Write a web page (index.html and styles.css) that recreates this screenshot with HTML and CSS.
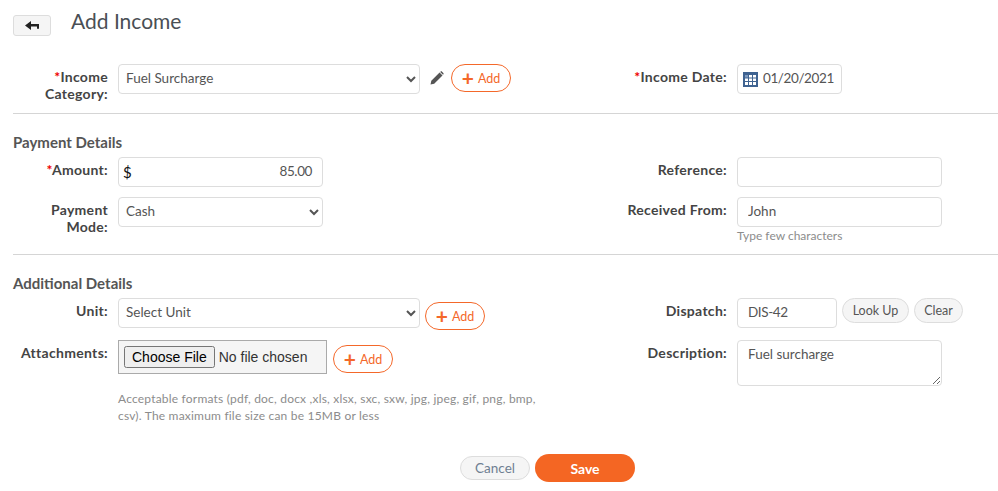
FILE: index.html
```html
<!DOCTYPE html>
<html lang="en">
<head>
    <meta charset="UTF-8">
    <title>Add Income</title>
    <link rel="stylesheet" href="styles.css">
</head>
<body>
    <div class="page-head">
        <button class="back-btn" title="Back">
            <svg width="14" height="10" viewBox="0 0 14 10"><path d="M0 4.5 L6 0 V3 H14 V7.8 H12 V5.6 H6 V9 Z" fill="#222"/></svg>
        </button>
        <h1>Add Income</h1>
    </div>

    <!-- Income category and date -->
    <div class="form-row first-row">
        <div class="col-left field">
            <label><span class="req">*</span>Income Category:</label>
            <select class="control wide"><option>Fuel Surcharge</option></select>
            <svg class="edit-icon" width="14" height="14" viewBox="0 0 14 14"><path d="M0.5 13.5 L1.3 9.8 L9.6 1.5 L12.5 4.4 L4.2 12.7 Z M10.5 .7 C11 .2 11.6 .2 12.1 .7 L13.3 1.9 C13.8 2.4 13.8 3 13.3 3.5 L13 3.8 L10.2 1 Z" fill="#555"/></svg>
            <button class="add-btn"><span class="plus">+</span> Add</button>
        </div>
        <div class="col-right field">
            <label><span class="req">*</span>Income Date:</label>
            <div class="control date-box">
                <svg width="15" height="15" viewBox="0 0 15 15"><rect width="15" height="15" fill="#3f6391"/><path d="M6 3h3v2.5H6zM10 3h3v2.5h-3zM2 6.5h3V9H2zM6 6.5h3V9H6zM10 6.5h3V9h-3zM2 10h3v3H2zM6 10h3v3H6zM10 10h3v3h-3z" fill="#fff"/><path d="M2 3h3v2.5H2z" fill="#7f9bc0"/></svg>
                <span class="digits">01/20/2021</span>
            </div>
        </div>
    </div>

    <hr class="rule-one">

    <!-- Payment details -->
    <h2>Payment Details</h2>
    <div class="form-row">
        <div class="col-left field">
            <label><span class="req">*</span>Amount:</label>
            <div class="control amount-box"><span class="dollar">$</span><span class="digits">85.00</span></div>
        </div>
        <div class="col-right field">
            <label>Reference:</label>
            <input class="control mid" type="text">
        </div>
    </div>
    <div class="form-row">
        <div class="col-left field">
            <label>Payment Mode:</label>
            <select class="control mid"><option>Cash</option></select>
        </div>
        <div class="col-right field">
            <label>Received From:</label>
            <div>
                <input class="control mid" type="text" value="John">
                <p class="hint">Type few characters</p>
            </div>
        </div>
    </div>

    <hr class="rule-two">

    <!-- Additional details -->
    <h2>Additional Details</h2>
    <div class="form-row">
        <div class="col-left field">
            <label>Unit:</label>
            <select class="control wide"><option>Select Unit</option></select>
            <button class="add-btn unit-add"><span class="plus">+</span> Add</button>
        </div>
        <div class="col-right field">
            <label>Dispatch:</label>
            <input class="control small digits" type="text" value="DIS-42">
            <button class="pill look-up">Look Up</button>
            <button class="pill clear">Clear</button>
        </div>
    </div>
    <div class="form-row last-row">
        <div class="col-left field">
            <label>Attachments:</label>
            <div>
                <div class="attach-line">
                    <input class="file-input" type="file">
                    <button class="add-btn file-add"><span class="plus">+</span> Add</button>
                </div>
                <p class="hint formats">Acceptable formats (pdf, doc, docx ,xls, xlsx, sxc, sxw, jpg, jpeg, gif, png, bmp, csv). The maximum file size can be 15MB or less</p>
            </div>
        </div>
        <div class="col-right field">
            <label>Description:</label>
            <textarea class="control mid desc">Fuel surcharge</textarea>
        </div>
    </div>

    <div class="actions">
        <button class="pill cancel">Cancel</button>
        <button class="save">Save</button>
    </div>
</body>
</html>
```

FILE: styles.css
```css
* {
    box-sizing: border-box;
}

body {
    margin: 0;
    padding: 0 0 0 13px;
    height: 491px;
    overflow: hidden;
    background-color: #fff;
    color: #444;
    font-family: 'Lato', sans-serif;
    font-size: 14px;
}

button {
    font-family: inherit;
    cursor: pointer;
}

.page-head {
    display: flex;
    align-items: flex-start;
    height: 64px;
    padding-top: 9px;
}

.back-btn {
    display: flex;
    align-items: center;
    justify-content: center;
    width: 38px;
    height: 21px;
    margin-top: 6px;
    padding: 0;
    background-color: #f5f5f5;
    border: 1px solid #ddd;
    border-radius: 3px;
}

h1 {
    margin: 0 0 0 20px;
    font-size: 21px;
    line-height: 24px;
    font-weight: 400;
    color: #4a4f55;
}

h2 {
    margin: 0;
    height: 25px;
    font-size: 15px;
    line-height: 20px;
    font-weight: 700;
    color: #555;
}

hr {
    border: none;
    border-top: 1px solid #d5d5d5;
    margin: 0;
}

.rule-one {
    margin-top: 11px;
    margin-bottom: 18px;
}

.rule-two {
    margin-top: 0;
    margin-bottom: 18px;
}

.form-row {
    display: flex;
    align-items: flex-start;
    margin-bottom: 10px;
}

.first-row {
    margin-bottom: 0;
}

.last-row {
    margin-bottom: 30px;
}

.col-left {
    width: 606px;
}

.col-right {
    flex: 1;
}

.field {
    display: flex;
    align-items: flex-start;
}

label {
    flex: none;
    width: 95px;
    margin-right: 10px;
    padding-top: 4px;
    text-align: right;
    font-size: 14px;
    line-height: 17px;
    font-weight: 700;
    letter-spacing: .3px;
    color: #444;
}

.col-right label {
    width: 108px;
}

.req {
    color: #e00;
}

.control {
    display: block;
    height: 30px;
    padding: 0 3px 3px;
    background-color: #fff;
    border: 1px solid #ddd;
    border-radius: 4px;
    color: #555;
    font-family: inherit;
    font-size: 13.5px;
}

input.control,
textarea.control {
    padding: 0 10px 3px;
}

.digits {
    letter-spacing: -.4px;
}

.wide {
    width: 302px;
}

.mid {
    width: 205px;
}

.small {
    width: 100px;
}

.date-box {
    display: flex;
    align-items: center;
    gap: 5px;
    width: 105px;
    padding: 0 5px 2px;
}

.date-box svg {
    flex: none;
    margin-top: 2px;
}

.amount-box {
    display: flex;
    align-items: center;
    justify-content: space-between;
    width: 205px;
    padding: 0 10px 3px 4px;
}

.dollar {
    color: #111;
    font-size: 15px;
    margin-top: 3px;
}

.edit-icon {
    margin: 7px 7px 0 10px;
}

.add-btn {
    display: flex;
    align-items: center;
    justify-content: center;
    gap: 4px;
    width: 60px;
    height: 28px;
    padding: 0;
    background-color: #fff;
    border: 1px solid #f4682a;
    border-radius: 14px;
    color: #f4682a;
    font-size: 12.5px;
}

.plus {
    font-size: 21px;
    line-height: 18px;
    font-weight: 700;
}

.unit-add {
    margin: 4px 0 0 5px;
}

.attach-line {
    display: flex;
    align-items: flex-start;
}

.file-input {
    display: block;
    width: 209px;
    height: 34px;
    padding: 5px;
    background-color: #f5f5f5;
    border: 1px solid #aaa;
    color: #333;
    font-family: 'Liberation Sans', sans-serif;
    font-size: 14px;
}

.file-add {
    margin: 5px 0 0 6px;
}

.hint {
    margin: 0;
    font-size: 12px;
    line-height: 17px;
    color: #8c8c8c;
}

.formats {
    width: 430px;
    margin-top: 16px;
    letter-spacing: .2px;
}

.pill {
    height: 25px;
    padding: 0;
    margin-left: 5px;
    background-color: #f5f5f5;
    border: 1px solid #ddd;
    border-radius: 13px;
    color: #555;
    font-size: 12.5px;
}

.look-up {
    width: 67px;
}

.clear {
    width: 49px;
}

.desc {
    height: 46px;
    padding-top: 5px !important;
}

.actions {
    display: flex;
    align-items: center;
    gap: 5px;
    margin-left: 447px;
}

.cancel {
    width: 70px;
    height: 24px;
    margin: 0;
    color: #6f7f92;
    font-size: 13.5px;
}

.save {
    width: 100px;
    height: 28px;
    padding: 0;
    background-color: #f46623;
    border: none;
    border-radius: 14px;
    color: #fff;
    font-size: 14px;
    font-weight: 700;
}
```
